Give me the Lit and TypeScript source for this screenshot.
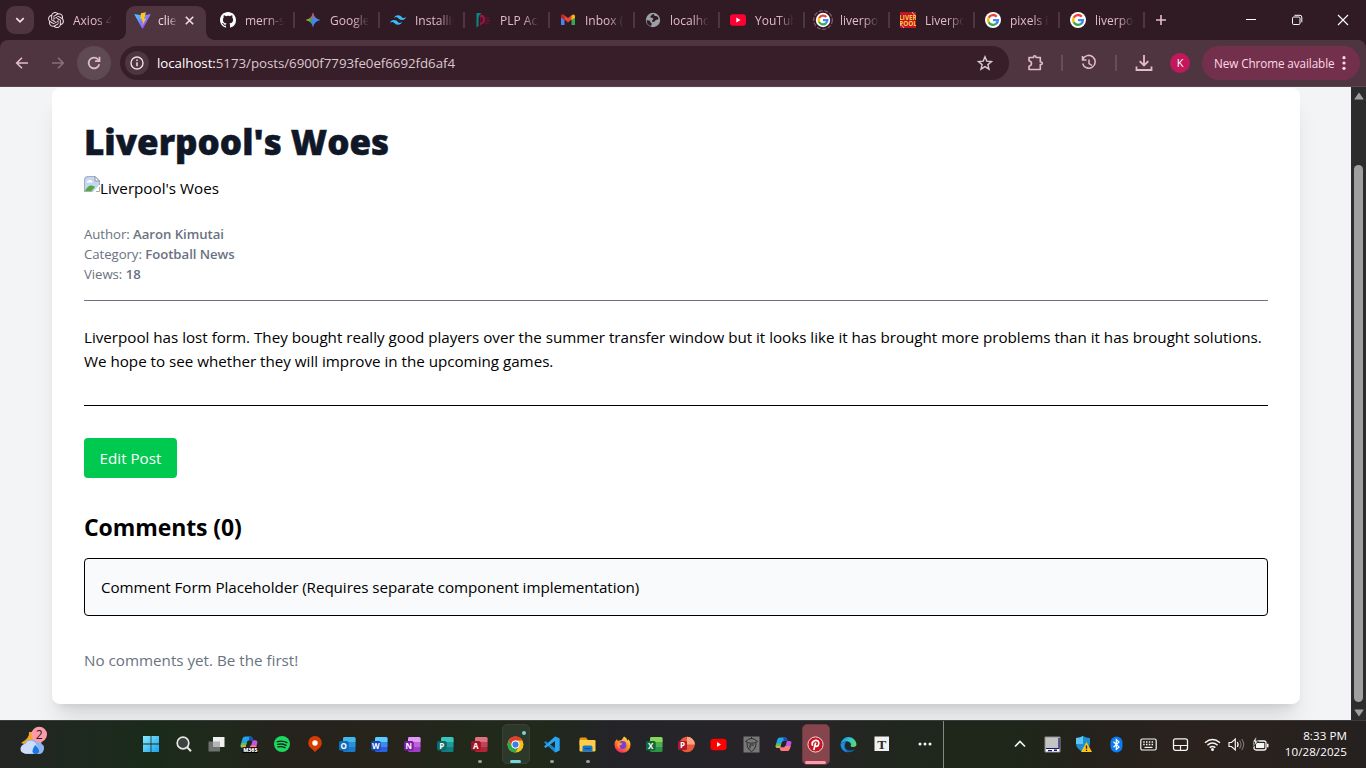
import { LitElement, html, css, svg, TemplateResult } from "lit";
import { customElement } from "lit/decorators.js";

type Art = TemplateResult;

const art = (size: number, box: string, body: unknown): Art =>
  html`<svg width=${size} height=${size} viewBox=${box} fill="none">${body}</svg>`;

/* ---------- favicons ---------- */
const openai = art(16, "0 0 24 24", svg`<path fill="#e8d8df" d="M22.28 9.82a5.98 5.98 0 0 0-.52-4.91 6.05 6.05 0 0 0-6.51-2.9A6.07 6.07 0 0 0 4.98 4.18a5.98 5.98 0 0 0-4 2.9 6.05 6.05 0 0 0 .74 7.1 5.98 5.98 0 0 0 .51 4.91 6.05 6.05 0 0 0 6.52 2.9A5.98 5.98 0 0 0 13.26 24a6.06 6.06 0 0 0 5.77-4.21 5.99 5.99 0 0 0 4-2.9 6.06 6.06 0 0 0-.75-7.07zm-9.02 12.61a4.48 4.48 0 0 1-2.88-1.04l.14-.08 4.78-2.76a.8.8 0 0 0 .39-.68v-6.74l2.02 1.17a.07.07 0 0 1 .04.05v5.58a4.5 4.5 0 0 1-4.49 4.5zM3.6 18.3a4.47 4.47 0 0 1-.54-3.01l.14.08 4.78 2.76a.77.77 0 0 0 .78 0l5.84-3.37v2.33a.08.08 0 0 1-.03.06L9.74 19.95a4.5 4.5 0 0 1-6.14-1.65zM2.34 7.9a4.49 4.49 0 0 1 2.37-1.98V11.6a.77.77 0 0 0 .39.68l5.81 3.35-2.02 1.17a.08.08 0 0 1-.07 0l-4.83-2.79A4.5 4.5 0 0 1 2.34 7.87zm16.6 3.85L13.1 8.36l2.02-1.16a.08.08 0 0 1 .07 0l4.83 2.79a4.49 4.49 0 0 1-.68 8.1v-5.68a.79.79 0 0 0-.4-.66zm2.01-3.02-.14-.09-4.77-2.78a.78.78 0 0 0-.79 0L9.41 9.23V6.9a.07.07 0 0 1 .03-.06l4.83-2.79a4.5 4.5 0 0 1 6.68 4.66zM8.31 12.86l-2.02-1.16a.08.08 0 0 1-.04-.06V6.07a4.5 4.5 0 0 1 7.38-3.45l-.14.08L8.7 5.46a.8.8 0 0 0-.39.68zm1.09-2.37 2.6-1.5 2.61 1.5v3l-2.6 1.5-2.61-1.5z"/>`);
const vite = art(17, "0 0 32 32", svg`<defs><linearGradient id="vi" x1="0" y1="0" x2="1" y2="1"><stop offset="0" stop-color="#41d1ff"/><stop offset=".5" stop-color="#7a7bff"/><stop offset="1" stop-color="#bd34fe"/></linearGradient></defs><path fill="url(#vi)" d="M31 5 17 30.5q-1 1-2 0L1 5q0-1.500 1.500-1L16 6.500 29.500 4q2-.2 1.500 1z"/><path fill="#ffc61c" d="m22.500.5-9.500 1.800-1 11 3.500-.8-1.200 5.200 2.800-.8-1.600 8.600 7.500-13.500-4 .8z"/>`);
const github = art(16, "0 0 16 16", svg`<path fill="#fff" d="M8 0C3.580 0 0 3.580 0 8c0 3.540 2.290 6.530 5.470 7.590.4.070.55-.17.55-.38 0-.19-.01-.82-.01-1.490-2.010.37-2.530-.49-2.690-.94-.09-.23-.48-.94-.82-1.130-.28-.15-.68-.52-.01-.53.63-.01 1.080.58 1.230.82.72 1.210 1.870.87 2.330.66.070-.52.28-.87.51-1.070-1.780-.2-3.640-.89-3.640-3.950 0-.87.31-1.590.82-2.150-.08-.2-.36-1.020.08-2.120 0 0 .67-.21 2.200.82A7.600 7.600 0 0 1 8 3.860c.68 0 1.360.09 2 .27 1.530-1.040 2.200-.82 2.200-.82.44 1.100.16 1.920.08 2.120.51.56.82 1.270.82 2.150 0 3.070-1.870 3.750-3.650 3.950.29.25.54.73.54 1.480 0 1.070-.01 1.930-.01 2.200 0 .21.15.46.55.38A8 8 0 0 0 16 8c0-4.420-3.580-8-8-8z"/>`);
const gemini = art(16, "0 0 16 16", svg`<defs><linearGradient id="ge" x1="0" y1=".5" x2="1" y2=".55"><stop offset=".05" stop-color="#fbbc04"/><stop offset=".35" stop-color="#34a853"/><stop offset=".5" stop-color="#4285f4"/><stop offset="1" stop-color="#3c8cff"/></linearGradient><linearGradient id="gr" x1="0" y1="0" x2="0" y2="1"><stop offset=".05" stop-color="#f5443a"/><stop offset=".5" stop-color="#f5443a" stop-opacity="0"/></linearGradient></defs><path fill="url(#ge)" d="M8 .5C9.200 5 11 6.800 15.500 8 11 9.200 9.200 11 8 15.500 6.800 11 5 9.200.5 8 5 6.800 6.800 5 8 .5z"/><path fill="url(#gr)" d="M8 .5C9.200 5 11 6.800 15.500 8 11 9.200 9.200 11 8 15.500 6.800 11 5 9.200.5 8 5 6.800 6.800 5 8 .5z"/>`);
const tailwind = art(16, "0 0 24 24", svg`<path fill="#38bdf8" d="M12 4.800c-3.200 0-5.200 1.600-6 4.800 1.200-1.600 2.600-2.200 4.200-1.800.91.23 1.570.89 2.290 1.620C13.660 10.610 15.030 12 18 12c3.200 0 5.200-1.600 6-4.800-1.200 1.600-2.600 2.200-4.200 1.800-.91-.23-1.560-.89-2.290-1.620C16.340 6.190 14.970 4.800 12 4.800zM6 12c-3.200 0-5.200 1.600-6 4.800 1.200-1.600 2.600-2.200 4.200-1.800.91.23 1.570.89 2.290 1.620C7.660 17.810 9.030 19.200 12 19.200c3.200 0 5.200-1.600 6-4.800-1.200 1.600-2.600 2.200-4.200 1.800-.91-.23-1.560-.89-2.290-1.620C10.340 13.390 8.970 12 6 12z"/>`);
const plp = art(16, "0 0 16 16", svg`<path fill="#0c8585" d="M1.500 1h5q-3 2-3 5v8l-2 1.500z"/><path fill="#9c1240" d="M5 2.500c5-.5 6.500 4.500 4 8.500L5 13.500z"/><path fill="#301a23" d="M5.500 5.500h2v4l-2 1.500z"/><path stroke="#7a1237" stroke-width="1.100" d="M10.500 6h3.500M10.500 8.500H15M10 11h4"/>`);
const gmail = art(16, "0 0 16 16", svg`<path fill="#4285f4" d="M1 4v9h3.500V7z"/><path fill="#34a853" d="M15 4v9h-3.500V7z"/><path fill="#ea4335" d="m1 4.200.8-1.600 1.500-.2L8 6l4.500-3.500 2.500 2L8 10.500z"/><path fill="#c5221f" d="M1 4v1.500l3.500 2.700V4L2.700 2.500Q1 2.500 1 4z"/><path fill="#fbbc04" d="M15 4v1.500l-3.500 2.700V4l1.800-1.500Q15 2.500 15 4z"/>`);
const globe = art(16, "0 0 16 16", svg`<circle cx="8" cy="8" r="7.200" fill="#9aa0a6"/><path fill="#301a23" d="M8 2c2 .3.500 1.500 2 2 1.500 0 3 .5 3.500 2.500-.5 2-2.500.5-3.500 2.500-1 1.500-3 1-3 0 0-1.500 1.500-1 1.500-2.500C7.500 5.500 5 6.500 5.500 4.500 6 3 7 3.500 8 2zM1.500 8.500C4 8 5.500 9 5.500 10.500c1 .2 1.500 1 1 2.500l-.8 1q-3.500-1-4.200-5.500z"/>`);
const youtube = art(16, "0 0 16 16", svg`<rect y="2.300" width="16" height="11.400" rx="3" fill="#ff0033"/><path fill="#fff" d="M6.300 5.500v5L10.600 8z"/>`);
const gMark = svg`<g fill="none" stroke-width="2.400"><path stroke="#ea4335" d="M11.700 4.700A4.900 4.900 0 0 0 3.700 5.700"/><path stroke="#fbbc05" d="M3.800 5.500a4.900 4.900 0 0 0 0 5"/><path stroke="#34a853" d="M3.700 10.300a4.900 4.900 0 0 0 7.500 1.400"/><path stroke="#4285f4" d="M8 8.100h4.900q0 2.200-1.800 3.700"/></g>`;
const google = art(16, "0 0 16 16", svg`<circle cx="8" cy="8" r="8" fill="#fff"/>${gMark}`);
const googleRing = art(20, "0 0 20 20", svg`<circle cx="10" cy="10" r="9.300" stroke="#8a5a6c" stroke-width="1.200" stroke-dasharray="4 1.600"/><circle cx="10" cy="10" r="7.200" fill="#fff"/><g transform="translate(2.800 2.800) scale(.9)">${gMark}</g>`);
const liverpool = art(16, "0 0 16 16", svg`<path fill="#c1142b" d="M0 0h16v16H0z"/><path stroke="#f4cfc6" d="m12 0 4 5M0 11l4 5" stroke-width=".8"/><text x="8" y="7.600" class="lfc">LIVER</text><text x="8" y="14.200" class="lfc">POOL</text>`);

interface TabInfo { label: string; icon: Art; active?: boolean; wide?: boolean }
const tabs: TabInfo[] = [
  { label: "Axios 4", icon: openai },
  { label: "clie", icon: vite, active: true },
  { label: "mern-s", icon: github },
  { label: "Google", icon: gemini },
  { label: "Installin", icon: tailwind },
  { label: "PLP Aca", icon: plp },
  { label: "Inbox (", icon: gmail },
  { label: "localho", icon: globe },
  { label: "YouTub", icon: youtube },
  { label: "liverpo", icon: googleRing, wide: true },
  { label: "Liverpo", icon: liverpool },
  { label: "pixels in", icon: google },
  { label: "liverpo", icon: google },
];

@customElement("browser-tabs")
export class BrowserTabs extends LitElement {
  static styles = css`
    :host { display: flex; height: 40px; background: #301a23; color: #e3bccb; align-items: flex-start; font-size: 12px; }
    svg { display: block; flex: none; }
    .list { width: 28px; height: 28px; margin: 6px 3px 0 6px; border-radius: 9px; background: #4f3540; display: grid; place-items: center; }
    .tab { box-sizing: border-box; width: 85px; height: 40px; padding-left: 11px; display: flex; align-items: center; gap: 8px; }
    .sep { margin: 0 -1px 0 auto; width: 2px; height: 16px; background: #4f3540; flex: none; }
    .label { width: 40px; flex: none; padding: 1px 0 0 1px; box-sizing: border-box; white-space: nowrap; -webkit-mask-image: linear-gradient(90deg, #000 60%, transparent 100%); mask-image: linear-gradient(90deg, #000 60%, transparent 100%); }
    .wide { padding-left: 9px; gap: 6px; }
    .on { position: relative; width: 80px; height: 34px; margin: 6px 3px 0 4px; padding: 0 0 6px 8px; background: #4f3540; border-radius: 9px 9px 0 0; color: #efd9e1; gap: 6px; }
    .on .label { width: 20px; }
    .on::before, .on::after { content: ""; position: absolute; bottom: 0; width: 8px; height: 8px; }
    .on::before { left: -8px; background: radial-gradient(circle at 0 0, transparent 7.500px, #4f3540 8px); }
    .on::after { right: -8px; background: radial-gradient(circle at 100% 0, transparent 7.500px, #4f3540 8px); }
    .x { margin-left: 2px; }
    .plus { margin: 14px 0 0 11px; }
    .win { margin-left: auto; display: flex; gap: 30px; padding: 12px 15px 0 0; }
    .lfc { font: 700 6.300px "Open Sans", sans-serif; fill: #f6cf3c; text-anchor: middle; }
  `;
  render() {
    return html`
      <div class="list">${art(10, "0 0 10 10", svg`<path d="m1.300 3.200 3.700 3.600 3.700-3.600" stroke="#f3dbe4" stroke-width="1.800"/>`)}</div>
      ${tabs.map((t, i) => html`
        <div class="tab ${t.active ? "on" : ""} ${t.wide ? "wide" : ""}">
          ${t.icon}<span class="label">${t.label}</span>
          ${t.active
            ? html`<span class="x">${art(9, "0 0 9 9", svg`<path d="m.8.8 7.400 7.400M8.200.8.8 8.200" stroke="#f3dbe4" stroke-width="1.600"/>`)}</span>`
            : i > 0 ? html`<i class="sep"></i>` : ""}
        </div>`)}
      <span class="plus">${art(12, "0 0 12 12", svg`<path d="M6 1v10M1 6h10" stroke="#e3bccb" stroke-width="1.600"/>`)}</span>
      <div class="win">
        ${art(16, "0 0 16 16", svg`<path d="M3 7.500h10" stroke="#fff"/>`)}
        ${art(16, "0 0 16 16", svg`<rect x="3.500" y="5" width="7.500" height="7.500" rx="1.200" stroke="#fff"/><path d="M5.500 3.300H11q1.800 0 1.800 1.800v5.200" stroke="#fff"/>`)}
        ${art(16, "0 0 16 16", svg`<path d="m3 3 10 10M13 3 3 13" stroke="#fff" stroke-width="1.100"/>`)}
      </div>`;
  }
}

@customElement("browser-toolbar")
export class BrowserToolbar extends LitElement {
  static styles = css`
    :host { display: block; background: #301a23; }
    .bar { box-sizing: border-box; display: flex; align-items: center; height: 47px; padding: 0 6px 1px 12px; background: #4f3540; border-radius: 8px 8px 0 0; border-bottom: 1px solid #5d4650; }
    .bar > * { flex: none; }
    svg { display: block; flex: none; }
    .reload { width: 34px; height: 34px; border-radius: 50%; background: #5f4a53; display: grid; place-items: center; margin-left: 9px; }
    .fwd { margin-left: 16px; }
    .omni { box-sizing: border-box; width: 889px; height: 34px; margin-left: 9px; padding: 0 16px 0 5px; border-radius: 17px; background: #371e28; display: flex; align-items: center; color: #dcc8d0; font-size: 13.300px; }
    .info { width: 24px; height: 24px; border-radius: 50%; background: #4f3540; display: grid; place-items: center; margin-right: 8px; }
    .url { letter-spacing: -0.04px; flex: 1; white-space: nowrap; padding-top: 1px; }
    .host { color: #fff; }
    .ext { margin-left: 18px; }
    .line { width: 2px; height: 16px; background: #6a4d59; }
    .l1 { margin: 0 17px 0 16px; }
    .l2 { margin: 0 18px 0 17px; }
    .avatar { width: 20px; height: 20px; border-radius: 50%; background: #c2185b; color: #fff; display: grid; place-items: center; font-size: 11px; margin: 0 12px 0 17px; }
    .bar .update { box-sizing: border-box; height: 34px; flex: 1; border-radius: 17px; background: #73304d; color: #ffd9e5; display: flex; align-items: center; padding: 0 7px 0 12px; justify-content: space-between; font-size: 11.700px; white-space: nowrap; letter-spacing: -0.08px; }
  `;
  render() {
    const c = "#e3bccb";
    return html`<div class="bar">
      ${art(20, "0 0 20 20", svg`<path d="M16 10H5M10 4.700 4.700 10l5.300 5.300" stroke=${c} stroke-width="1.600"/>`)}
      <span class="fwd">${art(20, "0 0 20 20", svg`<path d="M4 10h11M10 4.700l5.300 5.300-5.300 5.300" stroke="#8d6d7a" stroke-width="1.600"/>`)}</span>
      <div class="reload">${art(18, "0 0 18 18", svg`<path d="M14.300 10.300A5.400 5.400 0 1 1 13 5.300l1.500 1.500" stroke=${c} stroke-width="1.700"/><path d="M14.500 2.800v4.400h-4.400" stroke=${c} stroke-width="1.700"/>`)}</div>
      <div class="omni">
        <span class="info">${art(14, "0 0 14 14", svg`<circle cx="7" cy="7" r="6" stroke="#f0dde4" stroke-width="1.400"/><path d="M7 6.200v4M7 3.500V5" stroke="#f0dde4" stroke-width="1.500"/>`)}</span>
        <span class="url"><span class="host">localhost:</span>5173/posts/6900f7793fe0ef6692fd6af4</span>
        ${art(16, "0 0 16 16", svg`<path d="m8 1.800 1.800 4.300 4.700.4-3.600 3.100 1.100 4.600L8 11.700l-4 2.500 1.100-4.600-3.600-3.100 4.700-.4z" stroke="#dcc8d0" stroke-width="1.400"/>`)}
      </div>
      <span class="ext">${art(18, "0 0 18 18", svg`<path d="M2 3.500h4.500V3q0-1.200 1.200-1.200T9 3v.5h4.300V8h.7q1.300 0 1.300 1.300T14 10.500h-.7V15.500H2v-3.300q2.500-.5 2.500-2.700T2 6.800z" stroke=${c} stroke-width="1.600" stroke-linejoin="round"/>`)}</span>
      <i class="line l1"></i>
      ${art(18, "0 0 18 18", svg`<path d="M2.800 5.500A6.400 6.400 0 1 1 2.600 9.500M2.500 2v4h4M9 5.500v4l3 2" stroke=${c} stroke-width="1.500"/>`)}
      <i class="line l2"></i>
      ${art(18, "0 0 18 18", svg`<path d="M9 1v10M4.700 7.200 9 11.500l4.300-4.300M1.500 12.500V16h15v-3.500" stroke=${c} stroke-width="1.800"/>`)}
      <span class="avatar">K</span>
      <div class="update"><span>New Chrome available</span>
        ${art(14, "0 0 14 14", svg`<g fill="#ffd9e5"><circle cx="5" cy="1.700" r="1.600"/><circle cx="5" cy="7" r="1.600"/><circle cx="5" cy="12.300" r="1.600"/></g>`)}
      </div>
    </div>`;
  }
}

@customElement("post-page")
export class PostPage extends LitElement {
  static styles = css`
    :host { display: flex; height: 633px; overflow: hidden; background: #f3f4f6; color: #000; font-size: 15.200px; line-height: 24px; }
    .view { flex: 1; min-width: 0; padding: 1px 51px 0 52px; }
    .card { box-sizing: border-box; height: 616px; padding: 32px; background: #fff; border-radius: 8px; box-shadow: 0 20px 25px -5px rgba(0, 0, 0, .1), 0 8px 10px -6px rgba(0, 0, 0, .1); }
    h1 { margin: 0; padding-top: 2px; font-size: 35px; line-height: 40px; font-weight: 800; color: #101828; letter-spacing: -0.02px; -webkit-text-stroke: .5px #101828; height: 46px; }
    .broken { display: flex; margin-top: 8px; height: 24px; }
    .broken svg { flex: none; }
    .meta { margin-top: 24px; padding-bottom: 16px; border-bottom: 1px solid #6a7282; color: #6a7282; font-size: 13.200px; line-height: 20px; letter-spacing: -0.05px; }
    .meta b { font-weight: 600; }
    .body { margin: 24px 0 32px; letter-spacing: -0.015px; white-space: nowrap; }
    .act { border-top: 1px solid #000; padding-top: 32px; display: flex; }
    .edit { background: #00c950; color: #fff; border: 0; border-radius: 4px; height: 40px; width: 93px; padding: 0; font: inherit; }
    h2 { margin: 32px 0 0; font-size: 23px; line-height: 32px; font-weight: 700; letter-spacing: -0.1px; padding-top: 1px; }
    .form { margin-top: 15px; border: 1px solid #000; border-radius: 4px; background: #f9fafb; padding: 16px 16px; letter-spacing: -0.06px; }
    .none { margin-top: 32px; color: #6a7282; }
    .scroll { width: 15px; flex: none; background: #2c2c2c; display: flex; flex-direction: column; align-items: center; }
    .thumb { width: 9px; height: 537px; border-radius: 5px; background: #9f9f9f; margin-top: 64px; }
    .scroll svg { display: block; margin-top: 4px; }
    .scroll svg:last-child { margin-top: 6px; }
  `;
  render() {
    return html`<div class="view"><article class="card">
        <h1>Liverpool's Woes</h1>
        <div class="broken">${art(16, "0 0 16 16", svg`<path fill="#c3d6f5" d="M0 4q0-4 4-4h7l5 5v3l-7 8H0z"/><path d="M.5 16V4Q.5.5 4 .5h7l4.500 4.500v4" stroke="#a9adb5"/><path fill="#fff" stroke="#8e9299" d="M11 .5V5h4.500z"/><path fill="#fff" d="M2.500 6.500q0-2 2-2 1-1.500 2.500-.2 1.700.2 1.500 2.200z"/><path fill="#55a83c" d="M1 15q3-6 6.500-5.500 2 .2 3.500 1.500L7.500 15z"/><path stroke="#a9adb5" d="M0 15.500h8M15.500 11v4.500H12"/>`)}<span>Liverpool's Woes</span></div>
        <div class="meta">
          <div>Author: <b>Aaron Kimutai</b></div>
          <div>Category: <b>Football News</b></div>
          <div>Views: <b>18</b></div>
        </div>
        <div class="body">Liverpool has lost form. They bought really good players over the summer transfer window but it looks like it has brought more problems than it has brought solutions.<br>We hope to see whether they will improve in the upcoming games.</div>
        <div class="act"><button class="edit">Edit Post</button></div>
        <h2>Comments (0)</h2>
        <div class="form">Comment Form Placeholder (Requires separate component implementation)</div>
        <div class="none">No comments yet. Be the first!</div>
      </article></div>
      <div class="scroll">
        ${art(10, "0 0 10 10", svg`<path fill="#9f9f9f" d="M5 1.500 9.500 8q0 .5-.5.5H1Q.5 8.500.5 8z"/>`)}
        <div class="thumb"></div>
        ${art(10, "0 0 10 10", svg`<path fill="#9f9f9f" d="M5 8.500 9.500 2q0-.5-.5-.5H1q-.5 0-.5.5z"/>`)}
      </div>`;
  }
}

/* ---------- taskbar artwork ---------- */
const office = (letter: string, a: string, b: string, tile: string, x = 0): Art =>
  art(17, "0 0 17 17", svg`<rect x="4" y="1" width="12.500" height="15" rx="1.500" fill=${b}/><path fill=${a} d="M4 2.500Q4 1 5.500 1H15q1.500 0 1.500 1.500V6H4z"/><path fill=${a} opacity=".4" d="M10 6h6.500v5H10z"/><rect x=${x} y="5" width="9.500" height="9.500" rx="1.500" fill=${tile}/><text x=${x + 4.75} y="12.600" class="ltr">${letter}</text>`);

const windows = art(16, "0 0 16 16", svg`<defs><linearGradient id="wn" x1="0" y1="0" x2="1" y2="1"><stop stop-color="#8be9ff"/><stop offset="1" stop-color="#18a2ee"/></linearGradient></defs><path fill="url(#wn)" d="M0 0h7.600v7.600H0zM8.400 0H16v7.600H8.400zM0 8.400h7.600V16H0zM8.400 8.400H16V16H8.400z"/>`);
const search = art(16, "0 0 16 16", svg`<circle cx="7" cy="7" r="5.800" fill="#3c423d" stroke="#e6e6e6" stroke-width="1.700"/><path d="m11.200 11.200 3.800 4" stroke="#e6e6e6" stroke-width="2"/>`);
const taskView = art(17, "0 0 17 17", svg`<path fill="#6f7270" d="M.5 5.500H12v10H.5z"/><path fill="#f0f0f0" d="M5 1h11.500v10H5z"/><path fill="#b5b5b5" d="M5 5.500h7V11H5z"/>`);
const copilotBody = svg`<path fill="#1fa5e8" d="M5 1.500h5q1.500 0 2 2l.5 1.500H8.500Q7 5 6.500 7L5 12H2.500Q0 12 .8 9l1.500-5.500Q3 1.500 5 1.500z"/><path fill="#62c146" d="M1.300 7.500h5L5 12H2.500Q0 12 .8 9z"/><path fill="#f2a73b" d="M.9 10h4.800L5 12H2.500Q1 12 .9 10z"/><path fill="#c353e0" d="M12 5h2.500Q17 5 16.200 8l-1.500 5q-.7 2-2.700 2H7q-1.500 0-2-2l-.4-1.500h4Q10 11.500 10.500 10z"/><path fill="#ff7a7a" d="M15.700 10 14.700 13q-.7 2-2.700 2H7q-1.500 0-2-2l-.4-1.500h4Q9.500 11.500 10 10z"/><path fill="#1b4fc4" d="M8.500 1.500H10q1.500 0 2 2l.5 1.500H8.500z"/>`;
const m365 = art(18, "0 0 17 17", svg`${copilotBody}<path fill="#000" d="M2.500 11.500H17V17H2.500z"/><text x="9.800" y="16" class="m365">M365</text>`);
const copilot = art(17, "0 0 17 17", copilotBody);
const spotify = art(16, "0 0 16 16", svg`<circle cx="8" cy="8" r="8" fill="#1ed760"/><path d="M3.300 5.700q5-1.500 9.600 1M3.700 8.400q4.500-1.200 8.300.9M4 10.900q3.800-.9 7 .8" stroke="#14261a" stroke-width="1.400" stroke-linecap="round"/>`);
const pin = art(16, "0 0 16 16", svg`<path fill="#d83b01" d="M8 0a6.800 6.800 0 0 1 6.800 6.800q0 4-4.300 6.700L8 16l-2.500-2.500Q1.200 10.800 1.200 6.800A6.800 6.800 0 0 1 8 0z"/><circle cx="8" cy="7" r="2.700" fill="#fff"/>`);
const chrome = art(17, "0 0 17 17", svg`<circle cx="8.500" cy="8.500" r="8" fill="#fbc116"/><path fill="#e33b2e" d="M1.600 4.500A8 8 0 0 1 15.400 4.500H8.500a4 4 0 0 0-3.500 6z"/><path fill="#2da94f" d="M1.600 4.500A8 8 0 0 0 8.500 16.500L12 10.500a4 4 0 0 1-7 0z"/><circle cx="8.500" cy="8.500" r="4" fill="#fff"/><circle cx="8.500" cy="8.500" r="3.100" fill="#3b7ded"/>`);
const vscode = art(17, "0 0 17 17", svg`<path fill="#1b86cc" d="M12 .5 16.500 2.500v12L12 16.500 1 6.500 2.500 5 12 12z"/><path fill="#2aa5f2" d="M12 .5 16.500 2.500v12L12 16.500V5L2.500 12 1 10.500z"/>`);
const explorer = art(17, "0 0 17 17", svg`<path fill="#e09a12" d="M.5 3Q.5 1.500 2 1.500h5L9 4v5H.5z"/><rect x=".5" y="4" width="16" height="11.500" rx="1.200" fill="#ffce45"/><path fill="#1277cf" d="M3.500 15.500V11q0-1.500 1.500-1.500h7q1.500 0 1.500 1.500v4.500z"/><path stroke="#0b4d93" d="M5.500 12.500h6"/>`);
const firefox = art(17, "0 0 17 17", svg`<defs><linearGradient id="ff" x1=".8" y1="0" x2=".2" y2="1"><stop stop-color="#ffe14a"/><stop offset=".5" stop-color="#ff8a1e"/><stop offset="1" stop-color="#f5156c"/></linearGradient></defs><path fill="url(#ff)" d="M10 .5q3 1.500 3.500 4 1-.5.8-1.500 2.200 2.500 2.200 5.700A8 8 0 0 1 .5 9q0-4 2.500-6 0 1.500 1 2 1.500-1 3.200-.7Q8.500 3 10 .5z"/><circle cx="8.500" cy="9" r="3.900" fill="#7b3ce0"/><path fill="#ff9b20" d="M3.500 6q3 0 5 1.800-1 1.700-3 1.700-.5 2 1.500 3-3 0-3.800-3z"/>`);
const youtubeBig = art(17, "0 0 17 17", svg`<rect x=".5" y="2.800" width="16" height="11.500" rx="3" fill="#f00"/><path fill="#fff" d="M7 6v5l4-2.500z"/>`);
const acorn = art(17, "0 0 17 17", svg`<path fill="#777" d="M.5.5h16v16H.5z"/><path stroke="#2b2b2b" stroke-width="1" d="M2.500 5.500q6-6 12 0-6 3.500-12 0zM4 7q0 6 4.500 8.500Q13 13 13 7M7 8.500v4M7 9h4M8.500 3V1"/>`);
const pinterest = art(17, "0 0 17 17", svg`<circle cx="8.500" cy="8.500" r="7.600" fill="#c8141f" stroke="#f3d7da" stroke-width="1"/><path stroke="#fff" stroke-width="1.700" d="M5.600 9.700Q4.400 6.700 6.500 5.200q2.500-1.500 4.700 0 1.500 2 .1 4.200-1.700 1.700-3.200.3M8.700 6.500 6.800 14"/>`);
const edge = art(17, "0 0 17 17", svg`<defs><linearGradient id="ed" x1="0" y1=".3" x2="1" y2=".5"><stop stop-color="#1595dd"/><stop offset=".55" stop-color="#30c3d5"/><stop offset="1" stop-color="#5fdb5d"/></linearGradient></defs><path fill="url(#ed)" d="M.6 8.500A8 8 0 0 1 16.500 8q0 3-3.300 3-2.700 0-2.700-1.300 1-1.200 0-2.700Q8.500 4.800 5.500 5.500 2 6.200.6 8.500z"/><path fill="#0f67b8" d="M.6 8.500Q2.500 5.800 6 6.200q-2 2-1 5 1.500 3.500 5.500 3.300 2.500-.2 4.500-1.500A8 8 0 0 1 .6 8.500z"/><path fill="#1a8fe0" d="M.6 8.500Q2.500 5.800 6 6.200q-3 3-1 7 1 2.500 3 3.200A8 8 0 0 1 .6 8.500z"/>`);
const typeIcon = art(16, "0 0 16 16", svg`<path fill="#f1f1f1" d="M.5.5h14.500v14.500H.5z"/><text x="7.700" y="12.800" class="serif">T</text>`);
const dots = art(14, "0 0 14 14", svg`<g fill="#f5f5f5"><circle cx="2" cy="7" r="1.500"/><circle cx="7" cy="7" r="1.500"/><circle cx="12" cy="7" r="1.500"/></g>`);

interface Task { icon: Art; kind?: string }
const tasks: Task[] = [
  { icon: windows }, { icon: search }, { icon: taskView }, { icon: m365 }, { icon: spotify }, { icon: pin },
  { icon: office("O", "#42b8ee", "#1a79c8", "#0f6cbd") },
  { icon: office("W", "#5ccbff", "#2b5fe0", "#1647b8") },
  { icon: office("N", "#e29bf5", "#a33cc9", "#7a1da3") },
  { icon: office("P", "#37c6c0", "#0f7f80", "#0b6a6b") },
  { icon: office("A", "#dd7280", "#b02538", "#a01427"), kind: "mid run" },
  { icon: chrome, kind: "mid focus" },
  { icon: vscode, kind: "mid run" },
  { icon: explorer, kind: "mid run" },
  { icon: firefox, kind: "slim" },
  { icon: office("X", "#86d65a", "#2c9448", "#10693a"), kind: "slim" },
  { icon: art(17, "0 0 17 17", svg`<circle cx="9" cy="8.500" r="7.800" fill="#e8583a"/><path fill="#ffa384" d="M9 .7a7.800 7.800 0 0 1 7.800 7.800H9z"/><rect x="0" y="5" width="9" height="9" rx="1.500" fill="#b3182b"/><text x="4.500" y="12.400" class="ltr">P</text>`), kind: "slim" },
  { icon: youtubeBig, kind: "slim" }, { icon: acorn, kind: "slim" }, { icon: copilot, kind: "slim" },
  { icon: pinterest, kind: "slim alert" }, { icon: edge, kind: "slim" },
  { icon: typeIcon, kind: "mid" }, { icon: dots, kind: "more" },
];

const w = "#f5f5f5";
const tray: Art[] = [
  art(12, "0 0 12 12", svg`<path d="m1 8.500 5-5 5 5" stroke=${w} stroke-width="1.600"/>`),
  art(17, "0 0 17 17", svg`<path fill="#c4c4c4" stroke="#8f8f8f" d="M1 1h15v15H1z"/><path stroke="#161670" stroke-width="1.200" d="M15 2v10.500M2 12.500h13"/><path fill="#fff" d="M2 13h13v2.500H2z"/><path fill="#161670" d="M4 14h4v1.200H4zM10 13.500h3V15h-3z"/>`),
  art(18, "0 0 18 18", svg`<path fill="#1d8fd6" d="M8 1q3 2 7 2v5q0 6-7 9-7-3-7-9V3q4 0 7-2z"/><path fill="#5cc6f5" d="M8 1v8H1V3q4 0 7-2z"/><path fill="#ffc21a" d="m11.500 7 5.500 10H6z"/><path stroke="#2b2200" stroke-width="1.300" d="M11.500 10.500v3.200M11.500 14.700V16"/>`),
  art(17, "0 0 17 17", svg`<rect x="2.500" y=".5" width="12" height="16" rx="6" fill="#0a7cf0"/><path d="m5.500 5.700 5.500 5.300-2.700 2.500V3.500L11 6l-5.500 5.300" stroke="#fff" stroke-width="1.200"/>`),
  art(17, "0 0 17 17", svg`<rect x=".8" y="3" width="15.400" height="11" rx="1.500" stroke=${w} stroke-width="1.200"/><path stroke=${w} stroke-width="1.500" stroke-dasharray="1.500 1.300" d="M3.200 6h11M3.200 8.600h11"/><path d="M4.500 11.400h8" stroke=${w} stroke-width="1.200"/>`),
  art(17, "0 0 17 17", svg`<rect x="1.500" y="2.800" width="14" height="11.500" rx="2" stroke=${w} stroke-width="1.300"/><path d="M1.500 9.500h14M8.500 9.500v5" stroke=${w} stroke-width="1.200"/>`),
  art(17, "0 0 17 17", svg`<path d="M1 6.700q7.500-6.500 15 0M3.400 9.200q5.100-4.500 10.200 0M5.700 11.600q2.800-2.300 5.600 0" stroke=${w} stroke-width="1.500"/><circle cx="8.500" cy="13.400" r="1.500" fill=${w}/>`),
];

@customElement("task-bar")
export class TaskBar extends LitElement {
  static styles = css`
    :host { box-sizing: border-box; display: flex; height: 48px; border-top: 1px solid #3c3d3c; color: #fff;
      background: linear-gradient(90deg, #242523 0, #1f2820 60px, #1a2b1a 150px, #1e2a1b 200px, #26221c 290px, #26241b 390px, #20291a 470px, #20291a 540px, #242428 610px, #272428 800px, #20271d 900px, #1e2719 1010px, #26221c 1100px, #2b221d 1200px, #252120 1366px); }
    svg { display: block; }
    .weather { width: 135px; padding: 5px 0 0 18px; box-sizing: border-box; flex: none; }
    .app { width: 32.670px; flex: none; display: grid; place-items: center; position: relative; padding-bottom: 1px; box-sizing: border-box; }
    .mid { width: 36.100px; }
    .slim { width: 32.300px; }
    .more { width: 36px; margin-left: 6.400px; }
    .focus::before, .alert::before { content: ""; position: absolute; inset: 3px 4px 4px; border-radius: 5px; background: #2d372a; border: 1px solid #394235; }
    .alert::before { inset: 3px 2px 3px; background: #86444c; border-color: #6c3a41; }
    .app svg { position: relative; }
    .run::after, .focus::after, .alert::after { content: ""; position: absolute; bottom: 5px; width: 4px; height: 3px; border-radius: 2px; background: #9a9a9a; }
    .focus::after { width: 11px; background: #73d6dc; }
    .alert::after { width: 21px; bottom: 4px; background: #ff9aa8; }
    .badge { position: absolute; right: 8px; top: 10px; width: 4px; height: 4px; border-radius: 50%; background: #73d6dc; }
    .ltr { font: 700 8px "Open Sans", sans-serif; fill: #fff; text-anchor: middle; }
    .m365 { font: 800 5px "Open Sans", sans-serif; fill: #fff; text-anchor: middle; }
    .serif { font: 700 13.500px "Liberation Serif", serif; fill: #2a2a2a; text-anchor: middle; }
    .num { font: 12px "Open Sans", sans-serif; fill: #222; text-anchor: middle; }
    .tray { border-left: 1px solid #83877f; flex: 1; display: flex; padding: 0 0 1px 60.500px; align-items: center; }
    .t { width: 32px; display: grid; place-items: center; flex: none; }
    .vol { width: 16px; }
    .bat { width: 33px; display: grid; place-items: center; }
    .clock { margin-left: auto; padding-right: 19px; text-align: right; font-size: 11.600px; line-height: 16px; letter-spacing: 0.07px; white-space: nowrap; }
  `;
  render() {
    return html`
      <div class="weather">${art(30, "0 0 30 30", svg`<path fill="#f5a623" d="M11 6q1 6-8 11l6 2 8-4V6z"/><path fill="#8fb4ee" d="M8 28a5.500 5.500 0 0 1-1-10.500Q9 13 14 14q3-3 7 0 3 1 2.500 4 3 1 2.500 5-1 5-5 5z"/><path fill="#cfdef8" d="M7 27.500q-5-1-4.500-5 .5-4 5-4.500 2-4 6.500-3 4.500 1 4.500 5 3 3 0 6l-4 1.500z"/><path fill="#1778e0" d="M17 19q4 3.500 4 6.300a3.300 3.300 0 0 1-6.500 0Q14.500 23 17 19z"/><circle cx="21.200" cy="8.500" r="7.800" fill="#ff9aa8"/><text x="21.200" y="12.800" class="num">2</text>`)}</div>
      ${tasks.map(t => html`<div class="app ${t.kind ?? ""}">${t.icon}${t.kind === "mid focus" ? html`<i class="badge"></i>` : ""}</div>`)}
      <div class="tray">
        ${tray.map(i => html`<span class="t">${i}</span>`)}
        <span class="vol">${art(17, "0 0 17 17", svg`<path d="M1 6.500h2.500L7.300 3v11l-3.800-3.500H1z" stroke=${w} stroke-width="1.200"/><path d="M9.300 6q1.700 2.500 0 5" stroke=${w} stroke-width="1.200"/><path d="M11.500 4.500q3 4 0 8M13.700 3q4 5.500 0 11" stroke="#777370" stroke-width="1.200"/>`)}</span>
        <span class="bat">${art(17, "0 0 17 17", svg`<rect x="2" y="5" width="12" height="9" rx="2" stroke=${w} stroke-width="1.300"/><path fill=${w} d="M4 7h8.300v5H4zM15 7.700h1.500v3.600H15z"/><path fill=${w} stroke="#2b221d" stroke-width=".8" d="M4.500 0 .5 6h2.300L1.500 10.500 6.500 5H4z"/>`)}</span>
        <div class="clock">8:33 PM<br>10/28/2025</div>
      </div>`;
  }
}

@customElement("app-root")
export class AppRoot extends LitElement {
  static styles = css`
    :host { display: flex; flex-direction: column; width: 1366px; height: 768px; overflow: hidden; font-family: "Open Sans", "Noto Sans", sans-serif; }
    browser-tabs, browser-toolbar, post-page, task-bar { flex: none; }
  `;
  render() {
    return html`<browser-tabs></browser-tabs><browser-toolbar></browser-toolbar><post-page></post-page><task-bar></task-bar>`;
  }
}
